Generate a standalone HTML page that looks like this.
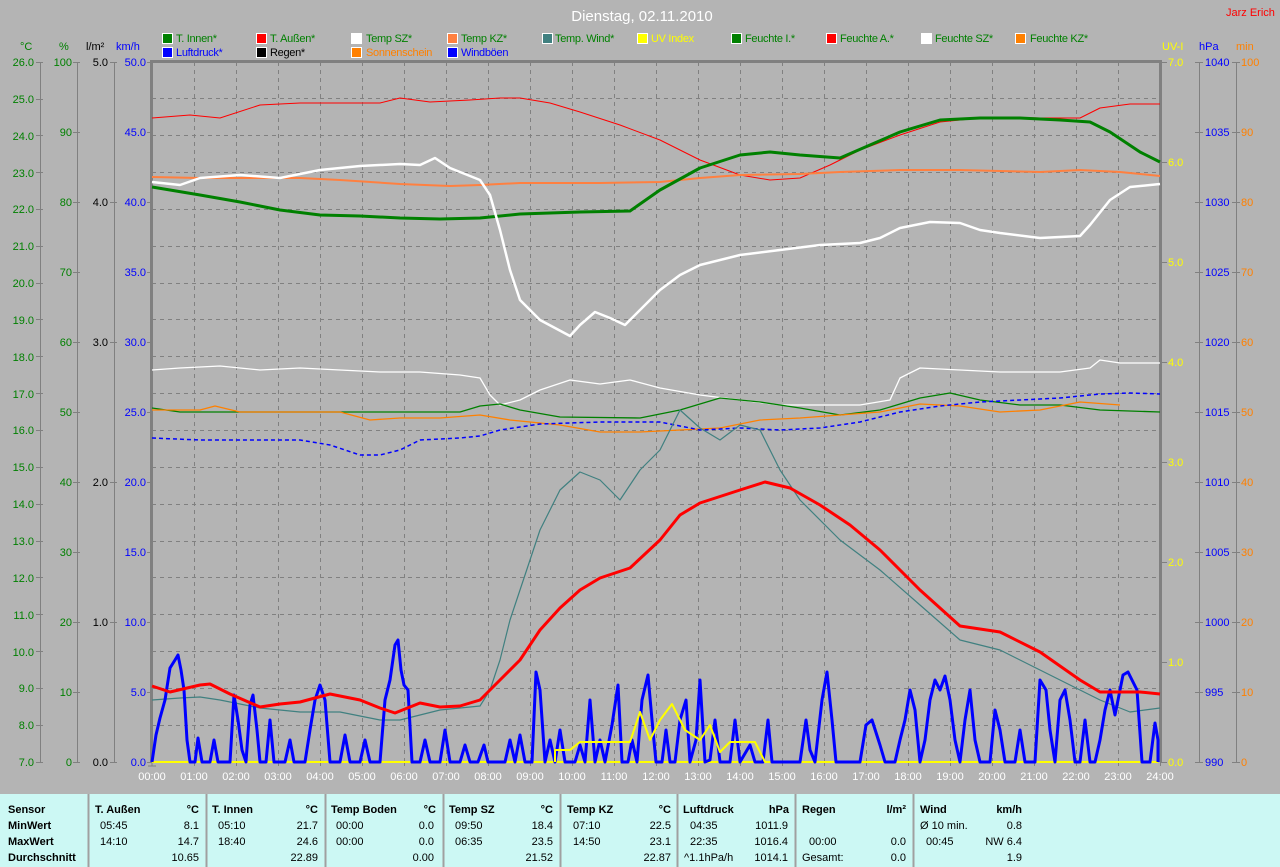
<!DOCTYPE html>
<html><head><meta charset="utf-8"><style>
html,body{margin:0;padding:0;background:#b4b4b4;}
svg{display:block;font-family:"Liberation Sans",sans-serif;}
</style></head><body>
<svg width="1280" height="867" viewBox="0 0 1280 867" xmlns="http://www.w3.org/2000/svg">
<rect width="1280" height="867" fill="#b4b4b4"/>
<!-- title -->
<text x="642" y="21" font-size="15" fill="#fff" text-anchor="middle">Dienstag, 02.11.2010</text>
<text x="1226" y="16" font-size="11" fill="#f00">Jarz Erich</text>
<!-- legend -->
<g font-size="11" letter-spacing="-0.3">
<g stroke="#fff" stroke-width="1">
<rect x="162.5" y="33.5" width="10" height="10" fill="#008000"/>
<rect x="256.5" y="33.5" width="10" height="10" fill="#f00"/>
<rect x="351.5" y="33.5" width="10" height="10" fill="#fff"/>
<rect x="447.5" y="33.5" width="10" height="10" fill="#ff8040"/>
<rect x="542.5" y="33.5" width="10" height="10" fill="#408080"/>
<rect x="637.5" y="33.5" width="10" height="10" fill="#ff0"/>
<rect x="731.5" y="33.5" width="10" height="10" fill="#008000"/>
<rect x="826.5" y="33.5" width="10" height="10" fill="#f00"/>
<rect x="921.5" y="33.5" width="10" height="10" fill="#fff"/>
<rect x="1015.5" y="33.5" width="10" height="10" fill="#ff8000"/>
<rect x="162.5" y="47.5" width="10" height="10" fill="#00f"/>
<rect x="256.5" y="47.5" width="10" height="10" fill="#000"/>
<rect x="351.5" y="47.5" width="10" height="10" fill="#ff8000"/>
<rect x="447.5" y="47.5" width="10" height="10" fill="#00f"/>
</g>
<text x="176" y="42" fill="#008000">T. Innen*</text>
<text x="270" y="42" fill="#008000">T. Außen*</text>
<text x="366" y="42" fill="#008000">Temp SZ*</text>
<text x="461" y="42" fill="#008000">Temp KZ*</text>
<text x="555" y="42" fill="#008000">Temp. Wind*</text>
<text x="651" y="42" fill="#ff0">UV Index</text>
<text x="745" y="42" fill="#008000">Feuchte I.*</text>
<text x="840" y="42" fill="#008000">Feuchte A.*</text>
<text x="935" y="42" fill="#008000">Feuchte SZ*</text>
<text x="1030" y="42" fill="#008000">Feuchte KZ*</text>
<text x="176" y="56" fill="#00f">Luftdruck*</text>
<text x="270" y="56" fill="#000">Regen*</text>
<text x="366" y="56" fill="#ff8000">Sonnenschein</text>
<text x="461" y="56" fill="#00f">Windböen</text>
</g>
<!-- axis headers -->
<g font-size="11">
<text x="20" y="50" fill="#008000">°C</text>
<text x="59" y="50" fill="#008000">%</text>
<text x="86" y="50" fill="#000">l/m²</text>
<text x="116" y="50" fill="#00f">km/h</text>
<text x="1162" y="50" fill="#ff0">UV-I</text>
<text x="1199" y="50" fill="#00f">hPa</text>
<text x="1236" y="50" fill="#ff8000">min</text>
</g>
<!-- grid -->
<g stroke="#808080" stroke-width="1" stroke-dasharray="4,4">
<path d="M194.5 62V762M236.5 62V762M278.5 62V762M320.5 62V762M362.5 62V762M404.5 62V762M446.5 62V762M488.5 62V762M530.5 62V762M572.5 62V762M614.5 62V762M656.5 62V762M698.5 62V762M740.5 62V762M782.5 62V762M824.5 62V762M866.5 62V762M908.5 62V762M950.5 62V762M992.5 62V762M1034.5 62V762M1076.5 62V762M1118.5 62V762"/>
<path d="M152 98.5H1160M152 135.5H1160M152 172.5H1160M152 209.5H1160M152 246.5H1160M152 283.5H1160M152 319.5H1160M152 356.5H1160M152 393.5H1160M152 430.5H1160M152 467.5H1160M152 504.5H1160M152 541.5H1160M152 577.5H1160M152 614.5H1160M152 651.5H1160M152 688.5H1160M152 725.5H1160"/>
</g>
<!-- axes lines -->
<g stroke="#808080" stroke-width="1" fill="none">
<path d="M40.5 62V762M77.5 62V762M114.5 62V762M1199.5 62V762M1236.5 62V762"/>
<path d="M36 62.5h7M36 99.5h7M36 135.5h7M36 172.5h7M36 209.5h7M36 246.5h7M36 283.5h7M36 319.5h7M36 356.5h7M36 393.5h7M36 430.5h7M36 467.5h7M36 504.5h7M36 541.5h7M36 577.5h7M36 614.5h7M36 651.5h7M36 688.5h7M36 725.5h7M36 762.5h7"/>
<path d="M73 62.5h7M73 132.5h7M73 202.5h7M73 272.5h7M73 342.5h7M73 412.5h7M73 482.5h7M73 552.5h7M73 622.5h7M73 692.5h7M73 762.5h7"/>
<path d="M110 62.5h7M110 202.5h7M110 342.5h7M110 482.5h7M110 622.5h7M110 762.5h7"/>
<path d="M147 62.5h5M147 132.5h5M147 202.5h5M147 272.5h5M147 342.5h5M147 412.5h5M147 482.5h5M147 552.5h5M147 622.5h5M147 692.5h5M147 762.5h5"/>
<path d="M1161 62.5h6M1161 162.5h6M1161 262.5h6M1161 362.5h6M1161 462.5h6M1161 562.5h6M1161 662.5h6M1161 762.5h6"/>
<path d="M1195 62.5h8M1195 132.5h8M1195 202.5h8M1195 272.5h8M1195 342.5h8M1195 412.5h8M1195 482.5h8M1195 552.5h8M1195 622.5h8M1195 692.5h8M1195 762.5h8"/>
<path d="M1232 62.5h8M1232 132.5h8M1232 202.5h8M1232 272.5h8M1232 342.5h8M1232 412.5h8M1232 482.5h8M1232 552.5h8M1232 622.5h8M1232 692.5h8M1232 762.5h8"/>
<path d="M152 62V766M148 766h8M194.5 762v4M236.5 762v4M278.5 762v4M320.5 762v4M362.5 762v4M404.5 762v4M446.5 762v4M488.5 762v4M530.5 762v4M572.5 762v4M614.5 762v4M656.5 762v4M698.5 762v4M740.5 762v4M782.5 762v4M824.5 762v4M866.5 762v4M908.5 762v4M950.5 762v4M992.5 762v4M1034.5 762v4M1076.5 762v4M1118.5 762v4M1160.5 762v4"/>
</g>
<path d="M151.5 61V762M150 61.5H1162M1160.5 61V762" stroke="#808080" stroke-width="3" fill="none"/>
<!-- left labels -->
<g font-size="11" text-anchor="end" fill="#008000">
<text x="34" y="66">26.0</text><text x="34" y="103">25.0</text><text x="34" y="140">24.0</text><text x="34" y="177">23.0</text><text x="34" y="213">22.0</text><text x="34" y="250">21.0</text><text x="34" y="287">20.0</text><text x="34" y="324">19.0</text><text x="34" y="361">18.0</text><text x="34" y="398">17.0</text><text x="34" y="434">16.0</text><text x="34" y="471">15.0</text><text x="34" y="508">14.0</text><text x="34" y="545">13.0</text><text x="34" y="582">12.0</text><text x="34" y="619">11.0</text><text x="34" y="656">10.0</text><text x="34" y="692">9.0</text><text x="34" y="729">8.0</text><text x="34" y="766">7.0</text>
<text x="72" y="66">100</text><text x="72" y="136">90</text><text x="72" y="206">80</text><text x="72" y="276">70</text><text x="72" y="346">60</text><text x="72" y="416">50</text><text x="72" y="486">40</text><text x="72" y="556">30</text><text x="72" y="626">20</text><text x="72" y="696">10</text><text x="72" y="766">0</text>
</g>
<g font-size="11" text-anchor="end" fill="#000">
<text x="108" y="66">5.0</text><text x="108" y="206">4.0</text><text x="108" y="346">3.0</text><text x="108" y="486">2.0</text><text x="108" y="626">1.0</text><text x="108" y="766">0.0</text>
</g>
<g font-size="11" text-anchor="end" fill="#00f">
<text x="146" y="66">50.0</text><text x="146" y="136">45.0</text><text x="146" y="206">40.0</text><text x="146" y="276">35.0</text><text x="146" y="346">30.0</text><text x="146" y="416">25.0</text><text x="146" y="486">20.0</text><text x="146" y="556">15.0</text><text x="146" y="626">10.0</text><text x="146" y="696">5.0</text><text x="146" y="766">0.0</text>
</g>
<g font-size="11" fill="#ff0">
<text x="1168" y="66">7.0</text><text x="1168" y="166">6.0</text><text x="1168" y="266">5.0</text><text x="1168" y="366">4.0</text><text x="1168" y="466">3.0</text><text x="1168" y="566">2.0</text><text x="1168" y="666">1.0</text><text x="1168" y="766">0.0</text>
</g>
<g font-size="11" fill="#00f">
<text x="1205" y="66">1040</text><text x="1205" y="136">1035</text><text x="1205" y="206">1030</text><text x="1205" y="276">1025</text><text x="1205" y="346">1020</text><text x="1205" y="416">1015</text><text x="1205" y="486">1010</text><text x="1205" y="556">1005</text><text x="1205" y="626">1000</text><text x="1205" y="696">995</text><text x="1205" y="766">990</text>
</g>
<g font-size="11" fill="#ff8000">
<text x="1241" y="66">100</text><text x="1241" y="136">90</text><text x="1241" y="206">80</text><text x="1241" y="276">70</text><text x="1241" y="346">60</text><text x="1241" y="416">50</text><text x="1241" y="486">40</text><text x="1241" y="556">30</text><text x="1241" y="626">20</text><text x="1241" y="696">10</text><text x="1241" y="766">0</text>
</g>
<!-- time labels -->
<g font-size="11" fill="#fff" text-anchor="middle">
<text x="152" y="780">00:00</text><text x="194" y="780">01:00</text><text x="236" y="780">02:00</text><text x="278" y="780">03:00</text><text x="320" y="780">04:00</text><text x="362" y="780">05:00</text><text x="404" y="780">06:00</text><text x="446" y="780">07:00</text><text x="488" y="780">08:00</text><text x="530" y="780">09:00</text><text x="572" y="780">10:00</text><text x="614" y="780">11:00</text><text x="656" y="780">12:00</text><text x="698" y="780">13:00</text><text x="740" y="780">14:00</text><text x="782" y="780">15:00</text><text x="824" y="780">16:00</text><text x="866" y="780">17:00</text><text x="908" y="780">18:00</text><text x="950" y="780">19:00</text><text x="992" y="780">20:00</text><text x="1034" y="780">21:00</text><text x="1076" y="780">22:00</text><text x="1118" y="780">23:00</text><text x="1160" y="780">24:00</text>
</g>
<!-- data -->
<g fill="none" stroke-linejoin="round">
<polyline stroke="#ff0" stroke-width="2" points="152,762 1158,762"/>
<polyline stroke="#f00" stroke-width="1" points="152,118 190,115 220,118 260,105 300,103 380,103 400,98 430,102 470,100 500,98 520,98 550,103 580,112 620,125 660,140 700,160 740,175 770,180 800,178 830,165 860,150 900,135 940,122 980,118 1000,117 1040,118 1080,118 1100,108 1130,104 1160,104"/>
<polyline stroke="#ff8040" stroke-width="2" points="152,177 200,178 300,178 340,180 400,184 450,186 480,185 520,183 600,183 660,182 700,178 740,175 800,174 840,172 900,170 960,170 1000,171 1040,172 1080,170 1120,172 1160,176"/>
<polyline stroke="#008000" stroke-width="3" points="152,187 200,195 240,202 280,210 320,215 360,216 400,218 440,219 480,218 520,214 580,212 630,211 660,190 700,168 740,155 770,152 800,155 840,158 870,145 900,132 940,120 980,118 1020,118 1060,120 1090,122 1110,132 1140,152 1160,162"/>
<polyline stroke="#fff" stroke-width="2.5" points="152,182 180,185 200,178 240,175 280,178 320,170 360,166 400,164 420,165 435,158 450,168 480,180 490,195 500,230 510,270 520,300 540,320 570,336 580,325 595,312 610,318 625,325 640,310 660,290 680,275 700,265 740,255 780,250 820,245 860,243 880,238 900,228 930,222 960,223 980,230 1000,233 1040,238 1080,236 1090,225 1110,200 1130,187 1160,184"/>
<polyline stroke="#fff" stroke-width="1.3" points="152,370 180,368 220,366 260,370 300,368 340,370 380,372 420,372 460,375 480,378 490,395 500,405 520,400 540,390 570,380 600,384 630,380 660,388 700,395 740,400 780,405 860,405 890,400 900,378 920,368 960,370 1000,372 1060,372 1090,368 1100,360 1120,363 1160,363"/>
<polyline stroke="#008000" stroke-width="1.3" points="152,408 180,412 460,412 480,406 500,404 520,410 560,417 640,418 680,410 720,398 760,402 800,408 840,415 880,410 920,398 950,393 980,400 1020,405 1060,405 1100,410 1160,412"/>
<polyline stroke="#ff8000" stroke-width="1.3" points="152,410 200,410 215,406 240,412 340,412 370,420 400,418 440,418 480,415 510,420 560,425 600,432 640,432 680,430 720,428 760,420 800,418 880,412 920,404 960,406 1000,412 1040,410 1080,402 1120,405"/>
<polyline stroke="#00f" stroke-width="1.5" stroke-dasharray="4,3" points="152,438 200,440 300,440 330,445 360,455 380,455 400,450 420,440 460,438 480,436 500,430 540,424 600,422 660,422 700,430 740,428 780,430 820,428 860,422 900,412 940,406 980,402 1020,400 1060,398 1100,394 1130,393 1160,394"/>
<polyline stroke="#408080" stroke-width="1.2" points="152,700 180,698 200,697 220,700 260,708 300,712 340,712 380,720 400,720 440,710 480,706 490,690 500,660 510,620 520,590 540,530 560,490 580,472 600,480 620,500 640,470 660,450 670,430 680,410 700,428 720,440 740,425 760,430 780,470 800,500 840,540 880,570 920,605 960,640 1000,650 1040,670 1080,690 1100,700 1130,712 1160,708"/>
<polyline stroke="#00f" stroke-width="3" points="152,762 156,735 160,718 165,700 170,668 175,660 178,655 181,670 184,690 187,740 190,762 195,762 198,738 202,762 210,762 214,740 218,762 230,762 234,695 238,720 242,750 246,762 250,705 253,695 257,730 260,762 266,762 270,720 274,762 285,762 290,740 294,762 305,762 310,730 315,700 320,685 325,700 330,762 340,762 345,735 350,762 360,762 365,740 370,762 380,762 385,700 390,680 395,645 398,640 401,670 404,685 408,690 412,762 420,762 425,740 430,762 440,762 445,730 450,762 460,762 465,745 470,762 478,762 484,745 488,762 505,762 510,740 515,762 520,735 525,762 532,762 536,672 540,690 545,762 550,740 555,762 560,730 565,762 575,762 580,745 585,762 590,700 595,762 600,740 605,762 612,725 618,685 622,762 628,762 632,740 637,762 642,700 648,675 652,720 656,762 662,762 666,730 670,762 675,762 680,720 686,700 690,762 696,740 700,680 705,762 710,760 715,720 720,762 730,762 735,720 740,762 750,745 755,762 763,762 768,720 772,762 800,762 806,720 810,750 815,762 822,700 827,672 832,720 836,762 860,762 866,725 872,720 880,745 885,762 895,762 900,740 905,720 910,690 915,710 920,762 925,740 930,700 935,680 940,690 945,676 950,700 955,740 960,762 965,720 970,690 975,740 980,762 990,762 995,710 1000,730 1005,762 1015,762 1020,730 1025,762 1035,762 1040,680 1046,690 1050,730 1055,762 1060,700 1065,690 1070,720 1075,762 1080,762 1085,720 1090,762 1095,762 1100,740 1105,710 1110,690 1115,715 1120,690 1123,675 1128,672 1132,680 1137,690 1142,762 1150,762 1155,723 1158,740 1158,762"/>
<polyline stroke="#f00" stroke-width="3" points="152,686 170,692 200,685 210,684 230,694 260,707 280,704 300,702 330,694 360,700 380,708 395,713 420,703 440,707 460,706 480,700 500,680 520,660 540,630 560,608 580,590 600,578 630,568 660,540 680,515 700,503 740,490 765,482 790,488 820,505 850,525 880,550 920,590 960,626 1000,632 1040,652 1080,680 1100,692 1120,692 1140,692 1160,694"/>
<polyline stroke="#ff0" stroke-width="2" points="555,762 555,750 570,750 580,742 630,742 640,712 650,740 660,720 672,704 685,730 700,740 710,725 720,752 730,742 755,742 765,762"/>
</g>
<!-- table -->
<rect x="0" y="794" width="1280" height="73" fill="#ccf8f4"/>
<path d="M88.5 794V867M206.5 794V867M325.5 794V867M443.5 794V867M560.5 794V867M677.5 794V867M795.5 794V867M913.5 794V867" stroke="#a0a0a0" stroke-width="2"/>
<g font-size="11" fill="#000">
<g font-weight="bold">
<text x="8" y="813">Sensor</text><text x="8" y="829">MinWert</text><text x="8" y="845">MaxWert</text><text x="8" y="861">Durchschnitt</text>
<text x="95" y="813">T. Außen</text><text x="212" y="813">T. Innen</text><text x="331" y="813">Temp Boden</text><text x="449" y="813">Temp SZ</text><text x="567" y="813">Temp KZ</text><text x="683" y="813">Luftdruck</text><text x="802" y="813">Regen</text><text x="920" y="813">Wind</text>
<g text-anchor="end"><text x="199" y="813">°C</text><text x="318" y="813">°C</text><text x="436" y="813">°C</text><text x="553" y="813">°C</text><text x="671" y="813">°C</text><text x="789" y="813">hPa</text><text x="906" y="813">l/m²</text><text x="1022" y="813">km/h</text></g>
</g>
<text x="100" y="829">05:45</text><text x="100" y="845">14:10</text>
<text x="218" y="829">05:10</text><text x="218" y="845">18:40</text>
<text x="336" y="829">00:00</text><text x="336" y="845">00:00</text>
<text x="455" y="829">09:50</text><text x="455" y="845">06:35</text>
<text x="573" y="829">07:10</text><text x="573" y="845">14:50</text>
<text x="690" y="829">04:35</text><text x="690" y="845">22:35</text><text x="684" y="861">^1.1hPa/h</text>
<text x="809" y="845">00:00</text><text x="802" y="861">Gesamt:</text>
<text x="920" y="829">Ø 10 min.</text><text x="926" y="845">00:45</text>
<g text-anchor="end">
<text x="199" y="829">8.1</text><text x="199" y="845">14.7</text><text x="199" y="861">10.65</text>
<text x="318" y="829">21.7</text><text x="318" y="845">24.6</text><text x="318" y="861">22.89</text>
<text x="434" y="829">0.0</text><text x="434" y="845">0.0</text><text x="434" y="861">0.00</text>
<text x="553" y="829">18.4</text><text x="553" y="845">23.5</text><text x="553" y="861">21.52</text>
<text x="671" y="829">22.5</text><text x="671" y="845">23.1</text><text x="671" y="861">22.87</text>
<text x="788" y="829">1011.9</text><text x="788" y="845">1016.4</text><text x="788" y="861">1014.1</text>
<text x="906" y="845">0.0</text><text x="906" y="861">0.0</text>
<text x="1022" y="829">0.8</text><text x="1022" y="845">NW 6.4</text><text x="1022" y="861">1.9</text>
</g>
</g>
</svg>
</body></html>
